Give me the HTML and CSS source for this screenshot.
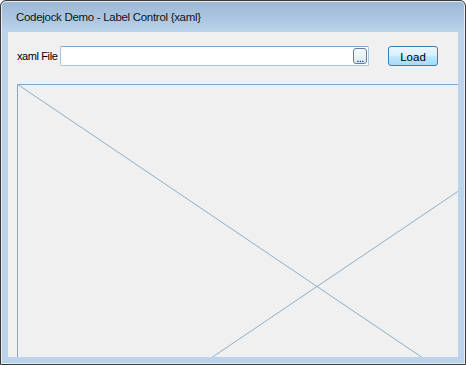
FILE: index.html
```html
<!DOCTYPE html>
<html>
<head>
<meta charset="utf-8">
<link rel="stylesheet" href="styles.css">
</head>
<body>
<div class="window">
  <div class="titlebar">Codejock Demo - Label Control {xaml}</div>
  <div class="client">
    <div class="toolbar">
      <span class="label">xaml File</span>
      <div class="input">
        <span class="browse">...</span>
      </div>
      <button class="load"><span class="load-text">Load</span></button>
    </div>
    <div class="panel">
      <svg class="canvas" width="600" height="405" viewBox="0 0 600 405">
        <line x1="0" y1="0.5" x2="600" y2="0.5" class="edge-top"/>
        <line x1="0.5" y1="0" x2="0.5" y2="405" class="edge-left"/>
        <line x1="0" y1="0" x2="600" y2="405" class="diag"/>
        <line x1="0" y1="405" x2="600" y2="0" class="diag"/>
      </svg>
    </div>
  </div>
</div>
</body>
</html>
```
FILE: styles.css
```css
html, body {
  margin: 0;
  padding: 0;
  background: #ffffff;
}
body {
  width: 466px;
  height: 365px;
  overflow: hidden;
  font-family: "Liberation Sans", Arial, sans-serif;
}
.window {
  box-sizing: border-box;
  width: 466px;
  height: 365px;
  border: 1px solid #3a3a3a;
  border-radius: 6px 6px 0 0;
  box-shadow: inset 0 0 0 1px #e4edf6;
  background: linear-gradient(#9bb8d6 0px, #b0cae5 22px, #bcd4eb 31px, #bcd4eb 100%);
  display: flex;
  flex-direction: column;
  padding: 0 7px 7px 7px;
}
.titlebar {
  height: 31px;
  flex: none;
  display: flex;
  align-items: center;
  padding-left: 8px;
  padding-top: 1px;
  box-sizing: border-box;
  font-size: 11.5px;
  letter-spacing: -0.3px;
  color: #141414;
}
.client {
  flex: 1;
  background: #f0f0f0;
  display: flex;
  flex-direction: column;
  padding: 14px 0 0 9px;
  min-height: 0;
}
.toolbar {
  display: flex;
  align-items: center;
  height: 20px;
  padding-right: 20px;
  flex: none;
}
.label {
  width: 43px;
  flex: none;
  font-size: 11px;
  letter-spacing: -0.4px;
  color: #000;
  white-space: nowrap;
}
.input {
  flex: 1;
  box-sizing: border-box;
  height: 20px;
  background: #fff;
  border: 1px solid #a9c6e2;
  border-top-color: #7fa6cf;
  border-radius: 2px;
  display: flex;
  justify-content: flex-end;
  align-items: center;
  padding-right: 1px;
}
.browse {
  box-sizing: border-box;
  width: 14px;
  height: 16px;
  border: 1px solid #5e7f9e;
  border-radius: 3px;
  background: linear-gradient(#f6f9fc, #dfe9f3);
  font-size: 11px;
  line-height: 18px;
  text-align: center;
  color: #000;
  letter-spacing: -0.5px;
  overflow: hidden;
}
.load {
  margin-left: 19px;
  width: 50px;
  height: 20px;
  box-sizing: border-box;
  border: 1px solid #3c7fb1;
  border-radius: 3px;
  background: linear-gradient(#eaf6fd 0%, #d9f0fc 45%, #bee6fd 55%, #a7d9f5 100%);
  padding: 0;
  flex: none;
}
.load-text {
  font-family: "Liberation Sans", Arial, sans-serif;
  font-size: 11.5px;
  font-weight: 400;
  color: #000;
}
.panel {
  margin-top: 18px;
  flex: 1;
  overflow: hidden;
  position: relative;
  min-height: 0;
}
.canvas {
  display: block;
}
.edge-top {
  stroke: #7ea7cb;
  stroke-width: 1;
}
.edge-left {
  stroke: #8ea5b6;
  stroke-width: 1;
}
.diag {
  stroke: #8db0c9;
  stroke-width: 1;
}
```
